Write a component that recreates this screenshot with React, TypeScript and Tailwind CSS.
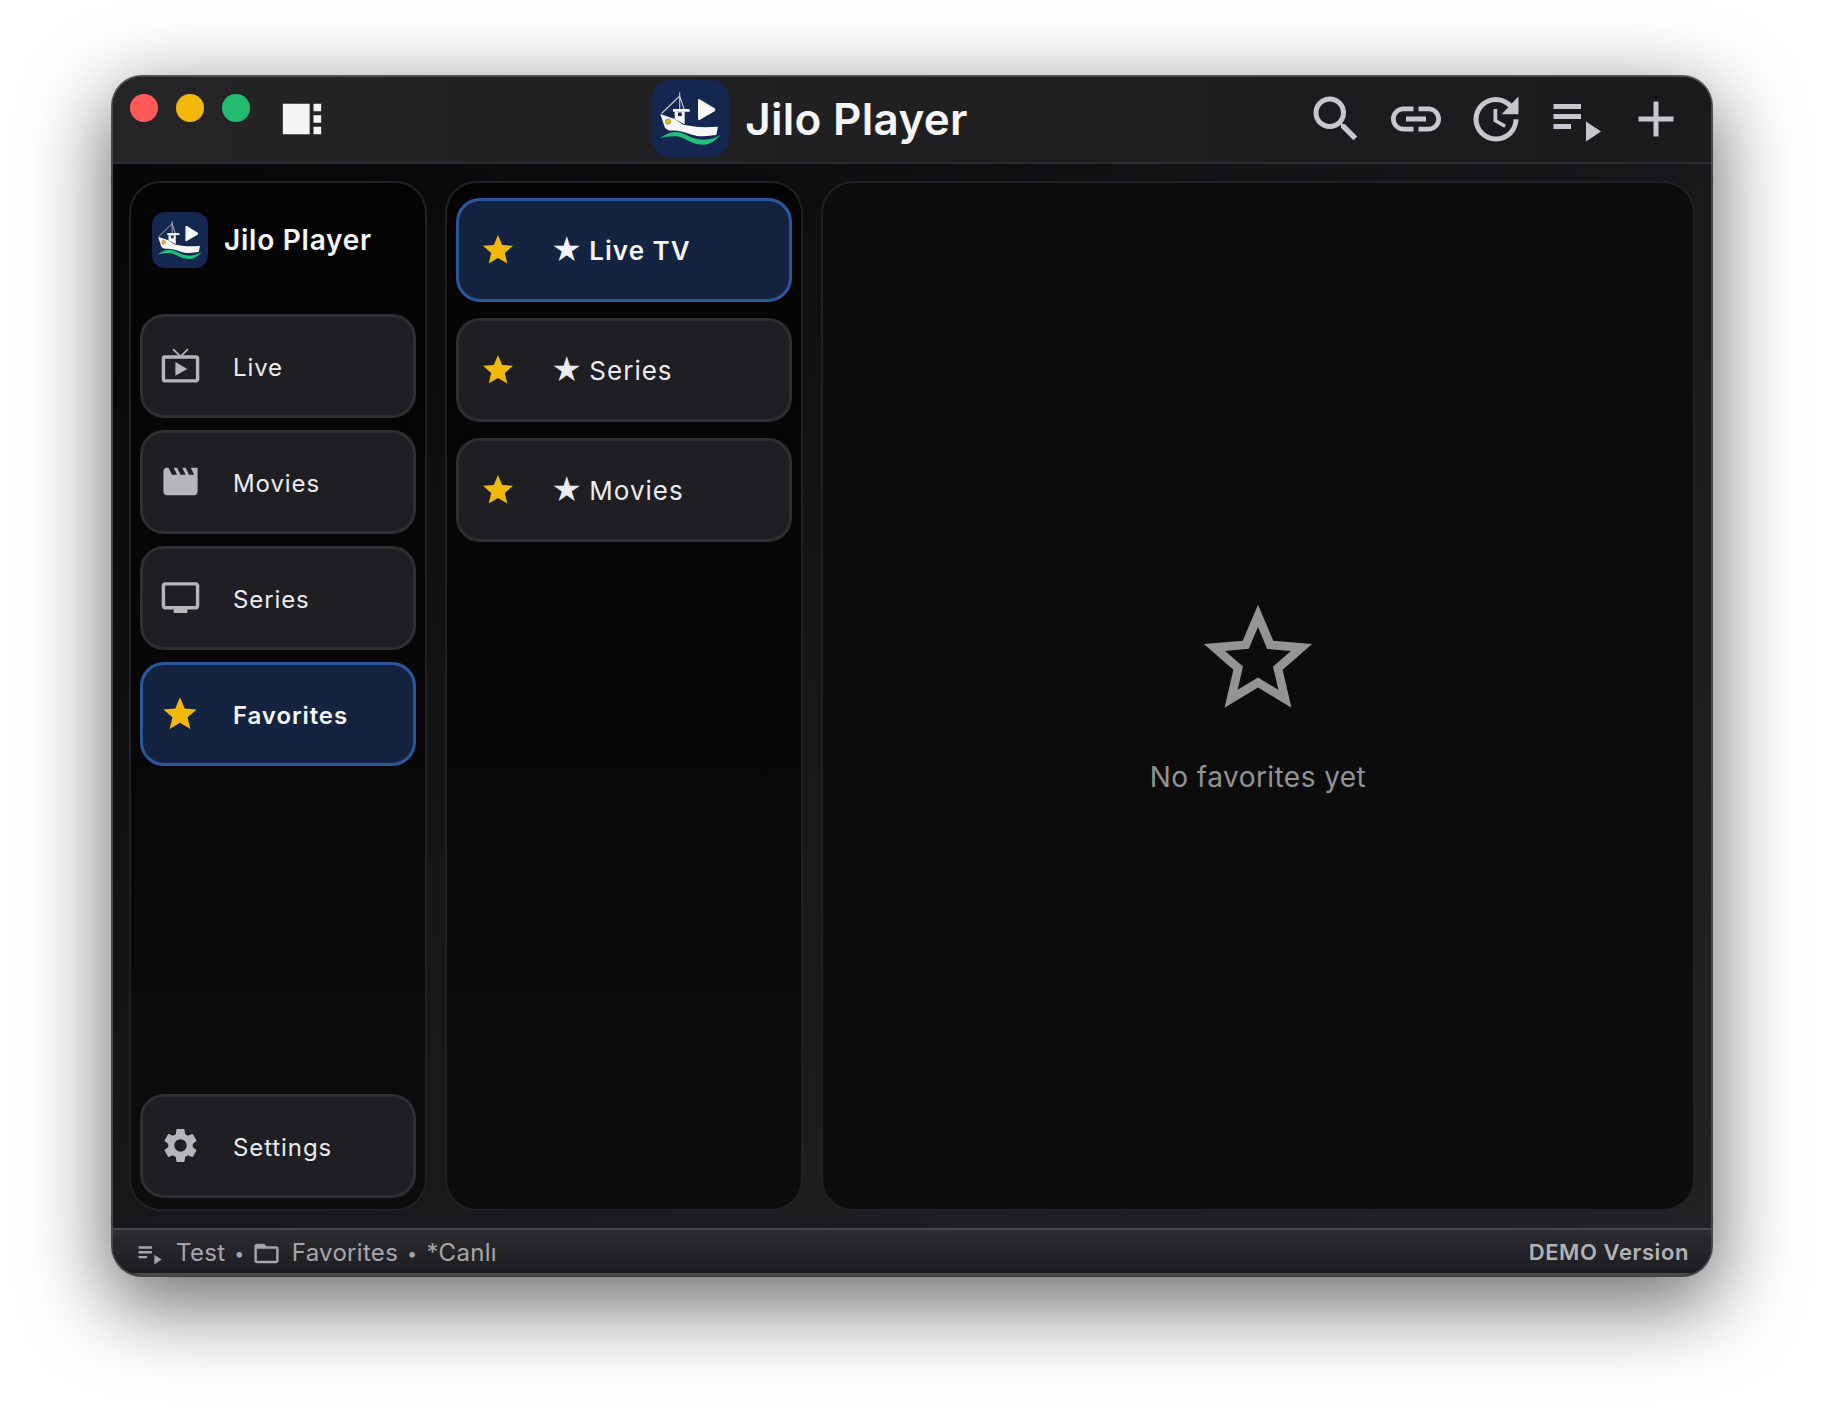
import React from "react";
import {
  MdSearch, MdLink, MdUpdate, MdPlaylistPlay, MdAdd, MdLiveTv, MdMovie, MdTv, MdStar,
  MdSettings, MdViewSidebar, MdStarBorder, MdFolderOpen,
} from "react-icons/md";

function Logo({ className }: { className: string }) {
  return (
    <svg viewBox="0 0 77 77" className={className}>
      <rect width="77" height="77" rx="18" fill="#132750" />
      <path d="M8.3 34L12.7 47.3Q14 50 17.7 50.7C24 50 30 51 39.3 54.5C44 56 48 56.5 51 56.3C56 56 60 55.5 64.3 55L66 46.7C58 47.2 50 47.4 44 46.8L31 44.7L22.7 39Z" fill="#f7f7f8" />
      <rect x="21" y="29" width="16.7" height="2.8" fill="#f7f7f8" />
      <path d="M22.7 31.8H32.7V44.5L22.7 39Z" fill="#f7f7f8" />
      <rect x="26" y="32.5" width="3.8" height="3.6" fill="#132750" />
      <path d="M27.7 12.3V29M27.7 16L9.5 33.5M27.7 16L32 29" stroke="#c9c9cd" strokeWidth="1.1" fill="none" />
      <path d="M46 20.5Q46 18.3 48 19.4L62.6 28.2Q64.4 29.7 62.6 31.2L48 39.8Q46 40.9 46 38.7Z" fill="#f7f7f8" />
      <path d="M7.7 58.3C13 54.5 18 52 24.3 52C30 52 35 55.5 39.3 57.3C45 59.8 52 60.5 58 59C62 58 66 56.5 68.7 55C64 60 58 64.7 51 64.7C46 64.7 43 63.5 39.3 62.3C34 60 30 56.8 24.3 56.3C18 56 12 57 7.7 58.3Z" fill="#22c07a" />
      <circle cx="16" cy="41.6" r="2.6" fill="#f2b90c" stroke="#8a7a50" strokeWidth="0.7" />
    </svg>
  );
}

function NavButton({ icon, label, active }: { icon: React.ReactNode; label: string; active?: boolean }) {
  return (
    <div
      className={
        active
          ? "flex h-[104px] items-center rounded-[24px] border-[3px] border-[#2b579f] bg-[#14233f] pl-[17px] text-[24px] font-semibold tracking-[0.9px] text-[#f5f5f7]"
          : "flex h-[104px] items-center rounded-[24px] border-[3px] border-[#2e2e33] bg-[#1e1e23] pl-[17px] text-[24px] tracking-[0.9px] text-[#ecebf0]"
      }
    >
      <span className="flex w-[40px] justify-center text-[#b6b6ba]">{icon}</span>
      <span className="ml-[33px] pt-[4px]">{label}</span>
    </div>
  );
}

function CategoryRow({ label, active }: { label: string; active?: boolean }) {
  return (
    <div
      className={
        active
          ? "flex h-[104px] items-center rounded-[24px] border-[3px] border-[#2b579f] bg-[#14233f] pl-[21px] text-[26px] font-semibold tracking-[1px] text-[#f5f5f7]"
          : "flex h-[104px] items-center rounded-[24px] border-[3px] border-[#2e2e33] bg-[#1e1e23] pl-[21px] text-[26px] tracking-[1px] text-[#ecebf0]"
      }
    >
      <MdStar className="h-[36px] w-[36px] text-[#f2b90c]" />
      <span className="ml-[35px] flex items-center">
        <span className="text-[30px] leading-none tracking-normal">★</span>
        <span className="ml-[7px]">{label}</span>
      </span>
    </div>
  );
}

export default function App() {
  return (
    <div className="flex h-screen w-full justify-center bg-white pt-[76px] font-['Inter','DejaVu_Sans',sans-serif]">
      <div className="flex h-[1200px] w-[1600px] flex-col overflow-hidden rounded-[30px] border border-[#48484b] bg-[#0b0b0c] shadow-[0_25px_80px_6px_rgba(0,0,0,0.56),0_0_0_1px_rgba(0,0,0,0.6)]">
        <header className="flex h-[87px] shrink-0 items-center justify-between border-b-2 border-[#2c2c30] bg-linear-to-r from-[#252527] to-[#1a1a1d] pr-[25px] pb-[2px] pl-[17px]">
          <div className="flex items-center">
            <div className="-mt-[21px] flex gap-[18px]">
              <span className="h-[28px] w-[28px] rounded-full bg-[#ff5a58]" />
              <span className="h-[28px] w-[28px] rounded-full bg-[#f2b90c]" />
              <span className="h-[28px] w-[28px] rounded-full bg-[#22bb6f]" />
            </div>
            <MdViewSidebar className="ml-[29px] h-[46px] w-[46px] text-[#f5f5f7]" />
          </div>
          <div className="mr-[11px] flex items-center">
            <Logo className="h-[77px] w-[77px]" />
            <span className="ml-[16px] text-[44px] font-semibold tracking-[0.3px] text-[#f5f5f7]">Jilo Player</span>
          </div>
          <div className="flex items-center gap-[20px] text-[#c8c6ce]">
            <MdSearch className="h-[60px] w-[60px]" />
            <MdLink className="h-[60px] w-[60px]" />
            <MdUpdate className="h-[60px] w-[60px]" />
            <MdPlaylistPlay className="h-[60px] w-[60px]" />
            <MdAdd className="h-[60px] w-[60px]" />
          </div>
        </header>

        <main className="flex min-h-0 flex-1 gap-[18px] bg-linear-to-br from-[#070708] via-[#18181a] to-[#232326] px-[16px] py-[17px]">
          <aside className="flex w-[298px] flex-col rounded-[32px] border-2 border-[#212123] bg-linear-to-b from-[#040404] to-[#0d0d0e] px-[9px] pt-[29px] pb-[11px]">
            <div className="flex items-center pl-[12px]">
              <Logo className="h-[56px] w-[56px]" />
              <span className="ml-[16px] text-[28px] font-semibold tracking-[0.75px] text-[#f5f5f7]">Jilo Player</span>
            </div>
            <div className="mt-[46px] flex flex-1 flex-col gap-[12px]">
              <NavButton icon={<MdLiveTv className="-mt-[2px] h-[41px] w-[41px] shrink-0" />} label="Live" />
              <NavButton icon={<MdMovie className="-mt-[2px] h-[41px] w-[41px] shrink-0" />} label="Movies" />
              <NavButton icon={<MdTv className="-mt-[2px] h-[41px] w-[41px] shrink-0" />} label="Series" />
              <NavButton icon={<MdStar className="h-[40px] w-[40px] shrink-0 text-[#f2b90c]" />} label="Favorites" active />
              <div className="mt-auto">
                <NavButton icon={<MdSettings className="-mt-[2px] h-[41px] w-[41px] shrink-0" />} label="Settings" />
              </div>
            </div>
          </aside>

          <section className="flex w-[358px] flex-col gap-[16px] rounded-[32px] border-2 border-[#212123] bg-linear-to-b from-[#040404] to-[#0d0d0e] px-[9px] pt-[15px]">
            <CategoryRow label="Live TV" active />
            <CategoryRow label="Series" />
            <CategoryRow label="Movies" />
          </section>

          <section className="flex flex-1 flex-col items-center justify-center rounded-[32px] border-2 border-[#212123] bg-[#0c0c0d] shadow-[inset_0_0_40px_rgba(255,255,255,0.02)]">
            <MdStarBorder className="h-[130px] w-[130px] text-[#949494]" />
            <span className="mt-[32px] text-[28px] tracking-[0.45px] text-[#939393]">No favorites yet</span>
          </section>
        </main>

        <footer className="flex h-[47px] shrink-0 items-center justify-between border-t-2 border-b-2 border-t-[#47474b] border-b-[#4a4a4d] bg-linear-to-b from-[#2d2d31] to-[#1d1d21] pt-[3px] pr-[22px] pl-[22px] text-[24px] tracking-[0.3px] text-[#a6a6a9]">
          <div className="flex items-center">
            <MdPlaylistPlay className="h-[29px] w-[29px]" />
            <span className="ml-[12px]">Test</span>
            <span className="ml-[9px] text-[18px]">•</span>
            <MdFolderOpen className="ml-[7px] h-[29px] w-[29px]" />
            <span className="ml-[11px]">Favorites</span>
            <span className="ml-[9px] text-[18px]">•</span>
            <span className="ml-[9px]">*Canlı</span>
          </div>
          <span className="mb-[2px] text-[22px] font-semibold tracking-[0.6px] text-[#b2b2b5]">DEMO Version</span>
        </footer>
      </div>
    </div>
  );
}
